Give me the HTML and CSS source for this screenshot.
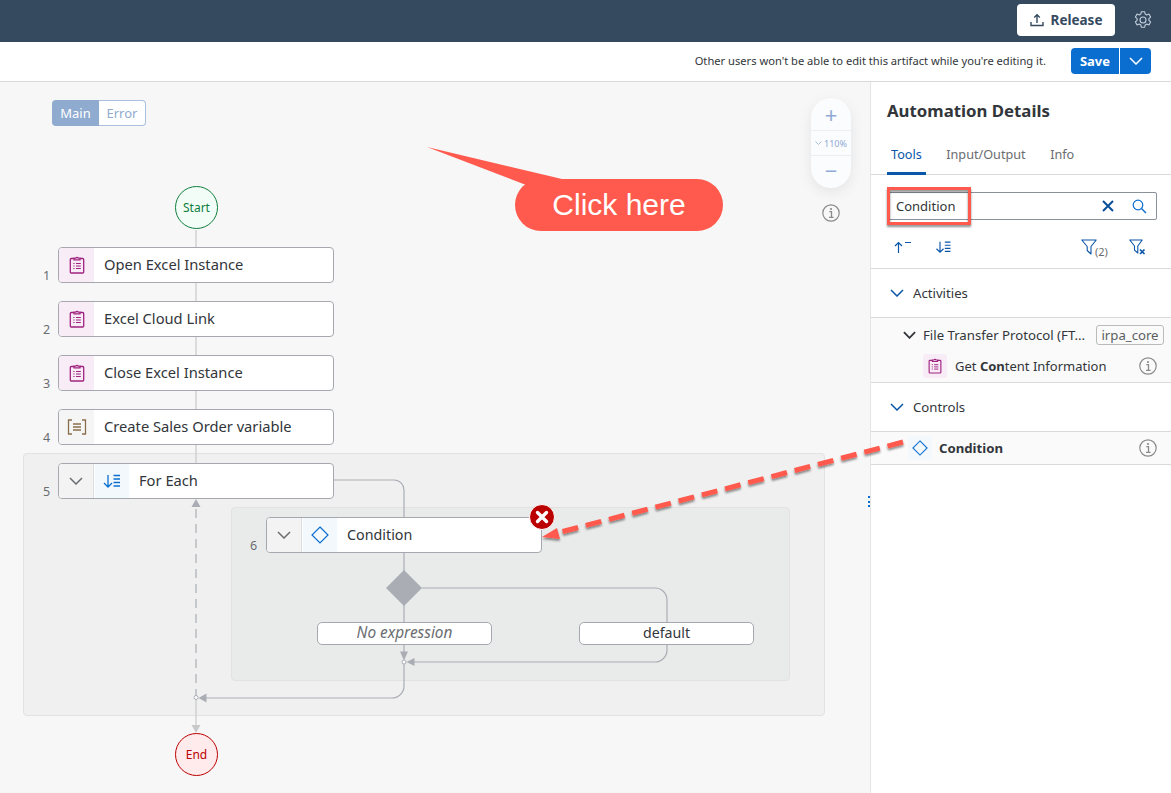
FILE: index.html
```html
<!DOCTYPE html>
<html>
<head>
<title>Automation Details</title>
<meta charset="UTF-8" />
<link rel="stylesheet" href="styles.css">
</head>
<body>
<svg class="defs" width="0" height="0">
	<defs>
		<symbol id="clip" viewBox="0 0 16 18">
			<path d="M5 2.5H2.2a.9.9 0 0 0-.9.9v12.7a.9.9 0 0 0 .9.9h11.6a.9.9 0 0 0 .9-.9V3.400a.9.9 0 0 0-.9-.9H11" fill="none" stroke="currentColor" stroke-width="1.300"/>
			<path d="M5 3.800V2.200h1.800a1.300 1.300 0 0 1 2.400 0H11v1.600z" fill="none" stroke="currentColor" stroke-width="1.200"/>
			<path d="M4.300 7.500h1.200M7 7.500h4.800M4.300 10h1.200M7 10h4.800M4.300 12.500h1.200M7 12.500h4.800" stroke="currentColor" stroke-width="1.100" fill="none"/>
		</symbol>
		<symbol id="diamond" viewBox="0 0 18 18">
			<path d="M9 1l8 8-8 8-8-8z" fill="none" stroke="currentColor" stroke-width="1.200"/>
		</symbol>
		<symbol id="sortdown" viewBox="0 0 18 16">
			<path d="M5 2v12M1 10l4 4 4-4" fill="none" stroke="currentColor" stroke-width="1.300"/>
			<path d="M10.500 2.500H17M10.500 6H17M10.500 9.500H17M10.500 13H17" fill="none" stroke="currentColor" stroke-width="1.300"/>
		</symbol>
		<symbol id="info" viewBox="0 0 18 18">
			<circle cx="9" cy="9" r="8.200" fill="none" stroke="currentColor" stroke-width="1.200"/>
			<path d="M7.300 7.600H9.500V13M7 13.300h4.600" fill="none" stroke="currentColor" stroke-width="1.300"/>
			<circle cx="9" cy="5" r="1.100" fill="currentColor"/>
		</symbol>
		<symbol id="chev" viewBox="0 0 14 8">
			<path d="M1 1l6 6 6-6" fill="none" stroke="currentColor" stroke-width="1.500"/>
		</symbol>
	</defs>
</svg>

<header class="shell">
	<button class="release">
		<svg width="14" height="14" viewBox="0 0 14 14"><path d="M7 10V2M4.200 4.500L7 1.700l2.800 2.800M1 9v3.500h12V9" fill="none" stroke="currentColor" stroke-width="1.400"/></svg>
		Release
	</button>
	<svg class="gear" width="20" height="20" viewBox="0 0 20 20"><path d="M8.300 1.800h3.400l.5 2.300 1.500.8 2.200-.8 1.700 3-1.700 1.500v1.800l1.700 1.500-1.700 3-2.200-.8-1.500.8-.5 2.300H8.300l-.5-2.300-1.500-.8-2.200.8-1.700-3 1.700-1.500V8.600L2.400 7.100l1.700-3 2.200.8 1.500-.8z" fill="none" stroke="currentColor" stroke-width="1.100" stroke-linejoin="round"/><circle cx="10" cy="10" r="3" fill="none" stroke="currentColor" stroke-width="1.100"/></svg>
</header>

<div class="notice">
	<span>Other users won't be able to edit this artifact while you're editing it.</span>
	<div class="save">
		<span class="save-label">Save</span>
		<span class="save-more"><svg width="14" height="8"><use href="#chev"/></svg></span>
	</div>
</div>

<main class="work">
	<section class="canvas">
		<div class="switch"><span class="switch-on">Main</span><span class="switch-off">Error</span></div>

		<div class="group outer"></div>
		<div class="group inner"></div>

		<svg class="wires" width="870" height="711" viewBox="0 82 870 711">
			<path class="wire-light" d="M196 230V463"/>
			<path class="wire-light" d="M196 698V726"/>
			<path class="wire-dash" d="M196 698V507"/>
			<path class="wire" d="M334 480H394a10 10 0 0 1 10 10V517"/>
			<path class="wire" d="M404 553V622M404 645V652"/>
			<path class="wire" d="M422 588H655a12 12 0 0 1 12 12V650a12 12 0 0 1-12 12H414"/>
			<path class="wire" d="M404 662V686a12 12 0 0 1-12 12H206"/>
			<path class="head" d="M196 499l4.500 8h-9z"/>
			<path class="head" d="M404 660.500l-4-9h8z"/>
			<path class="head" d="M406.500 662l8-4v8z"/>
			<path class="head" d="M198.500 698l8-4.500v9z"/>
			<path class="head-light" d="M196 733l-4.500-8h9z"/>
			<path class="head" d="M404 570l18 18-18 18-18-18z"/>
			<circle class="dot" cx="404" cy="662" r="2"/>
			<circle class="dot" cx="196" cy="697.500" r="2"/>
			<path class="tail" d="M427 147L562 179 526 185z"/>
		</svg>

		<div class="term start">Start</div>
		<div class="term end">End</div>

		<span class="num n1">1</span>
		<div class="node r1"><span class="ico ico-act"><svg width="16" height="18"><use href="#clip"/></svg></span><span class="lbl">Open Excel Instance</span></div>
		<span class="num n2">2</span>
		<div class="node r2"><span class="ico ico-act"><svg width="16" height="18"><use href="#clip"/></svg></span><span class="lbl">Excel Cloud Link</span></div>
		<span class="num n3">3</span>
		<div class="node r3"><span class="ico ico-act"><svg width="16" height="18"><use href="#clip"/></svg></span><span class="lbl">Close Excel Instance</span></div>
		<span class="num n4">4</span>
		<div class="node r4"><span class="ico ico-var"><svg width="20" height="16" viewBox="0 0 20 16"><path d="M5 1H1.500v14H5M15 1h3.500v14H15M6 5h8M6 8h8M6 11h8" fill="none" stroke="currentColor" stroke-width="1.300"/></svg></span><span class="lbl">Create Sales Order variable</span></div>
		<span class="num n5">5</span>
		<div class="node r5"><span class="tog"><svg width="14" height="8"><use href="#chev"/></svg></span><span class="ico ico-ctl"><svg width="18" height="16"><use href="#sortdown"/></svg></span><span class="lbl">For Each</span></div>
		<span class="num n6">6</span>
		<div class="node r6"><span class="tog"><svg width="14" height="8"><use href="#chev"/></svg></span><span class="ico ico-ctl"><svg width="18" height="18"><use href="#diamond"/></svg></span><span class="lbl">Condition</span></div>

		<div class="err"><svg width="26" height="26" viewBox="0 0 26 26"><circle cx="13" cy="13" r="12.500" fill="#bb0000" stroke="#fff" stroke-width="1"/><path d="M8.500 8.500l9 9M17.500 8.500l-9 9" stroke="#fff" stroke-width="3.400" stroke-linecap="round"/></svg></div>

		<div class="case c-none">No expression</div>
		<div class="case c-default">default</div>

		<div class="zoom">
			<span class="zoom-btn zoom-plus">+</span>
			<span class="zoom-val"><svg width="7" height="4"><use href="#chev"/></svg> 110%</span>
			<span class="zoom-btn zoom-minus">−</span>
		</div>
		<svg class="zoom-info" width="18" height="18"><use href="#info"/></svg>

		<div class="callout">Click here</div>
		<span class="grip"></span>
	</section>

	<aside class="panel">
		<h1>Automation Details</h1>
		<nav class="tabs">
			<a class="tab active">Tools</a>
			<a class="tab">Input/Output</a>
			<a class="tab">Info</a>
		</nav>
		<div class="search">
			<span class="search-text">Condition</span>
			<svg class="search-x" width="12" height="12" viewBox="0 0 12 12"><path d="M1 1l10 10M11 1L1 11" stroke="currentColor" stroke-width="2"/></svg>
			<svg class="search-go" width="15" height="15" viewBox="0 0 15 15"><circle cx="6" cy="6" r="4.800" fill="none" stroke="currentColor" stroke-width="1.200"/><path d="M9.500 9.500L14 14" stroke="currentColor" stroke-width="1.400"/></svg>
		</div>
		<div class="tools">
			<svg class="t-asc" width="17" height="12" viewBox="0 0 17 12"><path d="M4.500 12V1.500M1 5l3.500-3.500L8 5M11 1.500h6" fill="none" stroke="currentColor" stroke-width="1.200"/></svg>
			<svg class="t-desc" width="17" height="14"><use href="#sortdown"/></svg>
			<span class="t-filter">
				<svg width="16" height="16" viewBox="0 0 16 16"><path d="M.8 1h14.400L10 7.500V15L6.200 11.500v-4z" fill="none" stroke="currentColor" stroke-width="1.100" stroke-linejoin="round"/></svg>
				<span class="t-count">(2)</span>
			</span>
			<svg class="t-clear" width="17" height="16" viewBox="0 0 17 16"><path d="M.8 1h12.400L8.800 7V14L5.500 11.200V7z" fill="none" stroke="currentColor" stroke-width="1.100" stroke-linejoin="round"/><path d="M11 10.500l4.500 4.500M15.500 10.500L11 15" stroke="currentColor" stroke-width="1.700"/></svg>
		</div>
		<div class="sec"><svg width="14" height="8"><use href="#chev"/></svg><span>Activities</span></div>
		<div class="grp">
			<div class="grp-head">
				<svg width="13" height="8" viewBox="0 0 14 8"><path d="M1 1l6 6 6-6" fill="none" stroke="currentColor" stroke-width="2"/></svg>
				<span class="grp-name">File Transfer Protocol (FT...</span>
				<span class="tag">irpa_core</span>
			</div>
			<div class="item">
				<span class="item-ico"><svg width="14" height="16"><use href="#clip"/></svg></span>
				<span class="item-name">Get <b>Con</b>tent Information</span>
				<svg class="item-info" width="18" height="18"><use href="#info"/></svg>
			</div>
		</div>
		<div class="sec"><svg width="14" height="8"><use href="#chev"/></svg><span>Controls</span></div>
		<div class="ctl">
			<span class="ctl-ico"><svg width="16" height="16"><use href="#diamond"/></svg></span>
			<b>Condition</b>
			<svg class="item-info" width="18" height="18"><use href="#info"/></svg>
		</div>
	</aside>
</main>

<svg class="marks" width="1171" height="793" viewBox="0 0 1171 793">
	<defs>
		<filter id="soft" x="-10%" y="-30%" width="120%" height="170%"><feDropShadow dx="0" dy="2" stdDeviation="1.300" flood-color="#000" flood-opacity=".45"/></filter>
	</defs>
	<g filter="url(#soft)">
		<rect x="888.500" y="188.500" width="81" height="35" fill="none" stroke="#ff5a4d" stroke-width="3"/>
		<path d="M903 442L557 533" fill="none" stroke="#ff5a4d" stroke-width="5" stroke-dasharray="16 8"/>
		<path d="M542 537l15-9 3 11z" fill="#ff5a4d"/>
	</g>
</svg>
</body>
</html>
```

FILE: styles.css
```css
*{
	box-sizing: border-box ;
}
html, body{
	margin: 0 ;
	padding: 0 ;
}
body{
	position: relative ;
	width: 1171px ;
	height: 793px ;
	overflow: hidden ;
	background: #fff ;
	color: #32363a ;
	font-family: "Noto Sans", "Liberation Sans", sans-serif ;
	font-size: 13.2px ;
}
b{
	font-weight: 700 ;
}
.defs{
	position: absolute ;
}

/* top bars */
.shell{
	height: 42px ;
	background: #354a5f ;
	display: flex ;
	align-items: center ;
	justify-content: flex-end ;
	padding: 0 18px 2px 0 ;
	gap: 18px ;
}
.release{
	width: 98px ;
	height: 32px ;
	background: #fff ;
	color: #354a5f ;
	border: 0 ;
	border-radius: 4px ;
	font: 700 13.500px "Noto Sans", sans-serif ;
	display: flex ;
	align-items: center ;
	justify-content: center ;
	gap: 7px ;
}
.gear{
	color: #c3d0de ;
}
.notice{
	height: 40px ;
	border-bottom: 1px solid #d9d9d9 ;
	display: flex ;
	align-items: center ;
	justify-content: flex-end ;
	padding: 0 20px 1px 0 ;
	gap: 25px ;
	font-size: 11.150px ;
}
.notice > span{
	padding-bottom: 1px ;
}
.save{
	display: flex ;
	height: 26px ;
	color: #fff ;
	font-weight: 700 ;
}
.save-label{
	width: 48px ;
	background: #0a6ed1 ;
	border-radius: 4px 0 0 4px ;
	display: flex ;
	align-items: center ;
	justify-content: center ;
	font-size: 13px ;
}
.save-more{
	width: 31px ;
	margin-left: 1px ;
	background: #0a6ed1 ;
	border-radius: 0 4px 4px 0 ;
	display: flex ;
	align-items: center ;
	justify-content: center ;
}
.work{
	display: flex ;
	height: 711px ;
}

/* canvas */
.canvas{
	position: relative ;
	width: 870px ;
	background: #f7f7f7 ;
	font-size: 14.700px ;
}
.switch{
	position: absolute ;
	left: 52px ;
	top: 18px ;
	display: flex ;
	height: 26px ;
	font-size: 13px ;
}
.switch-on{
	width: 47px ;
	background: #8fabcf ;
	color: #fff ;
	border-radius: 4px 0 0 4px ;
	text-align: center ;
	line-height: 26px ;
}
.switch-off{
	width: 47px ;
	background: #fff ;
	color: #8fabcf ;
	border: 1px solid #a9bfdb ;
	border-left: 0 ;
	border-radius: 0 4px 4px 0 ;
	text-align: center ;
	line-height: 24px ;
}
.group{
	position: absolute ;
	border: 1px solid #e2e2e2 ;
	border-radius: 4px ;
}
.outer{
	left: 23px ;
	top: 371px ;
	width: 802px ;
	height: 263px ;
	background: #f0f0f0 ;
}
.inner{
	left: 231px ;
	top: 425px ;
	width: 559px ;
	height: 174px ;
	background: #e9ebeb ;
}
.wires{
	position: absolute ;
	left: 0 ;
	top: 0 ;
}
.wire, .wire-light, .wire-dash{
	fill: none ;
	stroke: #aaaeb4 ;
	stroke-width: 1.200 ;
}
.wire-light{
	stroke: #c9c9c9 ;
}
.wire-dash{
	stroke-dasharray: 9 6 ;
}
.head{
	fill: #aaaeb4 ;
}
.head-light{
	fill: #c9c9c9 ;
}
.dot{
	fill: #fff ;
	stroke: #aaaeb4 ;
}
.tail{
	fill: #ff5a4d ;
}
.term{
	position: absolute ;
	left: 175px ;
	width: 43px ;
	height: 43px ;
	border-radius: 50% ;
	display: flex ;
	align-items: center ;
	justify-content: center ;
	font-size: 12px ;
}
.start{
	top: 104px ;
	background: #f1fdf6 ;
	border: 1px solid #107e3e ;
	color: #107e3e ;
}
.end{
	top: 651px ;
	background: #ffebeb ;
	border: 1px solid #bb0000 ;
	color: #bb0000 ;
}
.num{
	position: absolute ;
	left: 43px ;
	font-size: 12.500px ;
	line-height: 14px ;
	color: #6a6d70 ;
}
.n1{ top: 187px ; }
.n2{ top: 241px ; }
.n3{ top: 295px ; }
.n4{ top: 349px ; }
.n5{ top: 403px ; }
.n6{ top: 457px ; left: 250px ; }
.node{
	position: absolute ;
	left: 58px ;
	width: 276px ;
	height: 36px ;
	background: #fff ;
	border: 1px solid #a5a9af ;
	border-radius: 4px ;
	display: flex ;
	align-items: stretch ;
	overflow: hidden ;
}
.r1{ top: 165px ; }
.r2{ top: 219px ; }
.r3{ top: 273px ; }
.r4{ top: 327px ; }
.r5{ top: 381px ; }
.r6{ top: 435px ; left: 266px ; font-size: 14.300px ; }
.ico{
	width: 35px ;
	display: flex ;
	align-items: center ;
	justify-content: center ;
}
.ico-act{
	background: #f8ecf6 ;
	color: #a0237f ;
}
.ico-var{
	background: #f5f5f5 ;
	color: #8a6d4b ;
}
.ico-ctl{
	width: 34px ;
	background: #f3f8fd ;
	color: #0a6ed1 ;
}
.tog{
	width: 35px ;
	margin-right: 1px ;
	background: #f3f3f3 ;
	border-right: 1px solid #dedede ;
	color: #6a6d70 ;
	display: flex ;
	align-items: center ;
	justify-content: center ;
}
.lbl{
	align-self: center ;
	padding: 0 0 2px 10px ;
	white-space: nowrap ;
}
.err{
	position: absolute ;
	left: 529px ;
	top: 422px ;
	line-height: 0 ;
}
.case{
	position: absolute ;
	top: 540px ;
	width: 175px ;
	height: 23px ;
	background: #fff ;
	border: 1px solid #a5a9af ;
	border-radius: 5px ;
	text-align: center ;
	line-height: 20px ;
}
.c-none{
	left: 317px ;
	font-size: 15.400px ;
	font-style: italic ;
	color: #6a6d70 ;
}
.c-default{
	left: 579px ;
	font-size: 14.200px ;
}
.zoom{
	position: absolute ;
	left: 811px ;
	top: 16px ;
	width: 40px ;
	height: 90px ;
	background: #fbfcfd ;
	border-radius: 20px ;
	box-shadow: 0 4px 14px rgba(0, 0, 0, .08) ;
	display: flex ;
	flex-direction: column ;
	color: #8fabd5 ;
}
.zoom-btn{
	height: 32px ;
	display: flex ;
	align-items: center ;
	justify-content: center ;
	font-size: 22px ;
	line-height: 1 ;
}
.zoom-minus{
	padding-bottom: 4px ;
}
.zoom-val{
	height: 26px ;
	border-top: 1px solid #eee ;
	border-bottom: 1px solid #eee ;
	display: flex ;
	align-items: center ;
	justify-content: center ;
	gap: 2px ;
	font-size: 9px ;
	white-space: nowrap ;
}
.zoom-info{
	position: absolute ;
	left: 822px ;
	top: 122px ;
	color: #8b8b8b ;
}
.callout{
	position: absolute ;
	left: 515px ;
	top: 97px ;
	width: 208px ;
	height: 52px ;
	background: #ff5a4d ;
	border-radius: 26px ;
	color: #fff ;
	font-family: "Liberation Sans", sans-serif ;
	font-size: 30px ;
	line-height: 51px ;
	text-align: center ;
}
.grip{
	position: absolute ;
	left: 868px ;
	top: 414px ;
	width: 2px ;
	height: 11px ;
	background: repeating-linear-gradient(#0a6ed1 0 2px, transparent 2px 4.500px) ;
}

/* side panel */
.panel{
	width: 301px ;
	border-left: 1px solid #e5e5e5 ;
	background: #fff ;
}
.panel h1{
	margin: 0 ;
	padding: 17px 0 0 16px ;
	height: 50px ;
	font-size: 16.800px ;
	line-height: 24px ;
	font-weight: 700 ;
}
.tabs{
	display: flex ;
	height: 43px ;
	padding-left: 16px ;
	border-bottom: 1px solid #d9d9d9 ;
	gap: 16.500px ;
	font-size: 12.650px ;
}
.tab{
	color: #6a6d70 ;
	line-height: 44px ;
	height: 43px ;
	padding: 0 4px ;
}
.active{
	color: #0a56a8 ;
	border-bottom: 3px solid #0a56a8 ;
}
.search{
	margin: 17px 14px 0 17px ;
	height: 28px ;
	border: 1px solid #89919a ;
	border-radius: 2px ;
	display: flex ;
	align-items: center ;
	padding-left: 7px ;
	font-size: 13px ;
}
.search-text{
	flex: 1 ;
}
.search-x{
	color: #0a4f99 ;
	margin-right: 18px ;
}
.search-go{
	color: #0a6ed1 ;
	margin-right: 9px ;
}
.tools{
	height: 49px ;
	padding: 6px 0 0 23px ;
	display: flex ;
	align-items: center ;
	color: #0a56a8 ;
	border-bottom: 1px solid #d9d9d9 ;
}
.t-desc{
	margin-left: 24px ;
}
.t-filter{
	margin-left: 129px ;
	display: flex ;
	align-items: flex-end ;
}
.t-count{
	font-size: 11px ;
	color: #6a6d70 ;
	margin: 0 0 -4px -2px ;
}
.t-clear{
	margin-left: 21px ;
}
.sec{
	height: 49px ;
	display: flex ;
	align-items: center ;
	gap: 9px ;
	padding-left: 19px ;
	border-bottom: 1px solid #d9d9d9 ;
	color: #0a56a8 ;
}
.sec span{
	color: #32363a ;
}
.grp{
	background: #fafafa ;
	height: 65px ;
	border-bottom: 1px solid #d9d9d9 ;
}
.grp-head{
	height: 33px ;
	display: flex ;
	align-items: center ;
	padding-left: 32px ;
	gap: 7px ;
}
.grp-name{
	white-space: nowrap ;
	flex: 1 ;
}
.tag{
	flex: none ;
	width: 68px ;
	height: 20px ;
	margin-right: 7px ;
	border: 1px solid #bbb ;
	border-radius: 3px ;
	text-align: center ;
	line-height: 18px ;
	color: #5a5e62 ;
}
.item{
	display: flex ;
	align-items: center ;
	height: 30px ;
	padding-left: 52px ;
}
.item-ico{
	width: 24px ;
	height: 24px ;
	background: #f8ecf6 ;
	color: #a0237f ;
	border-radius: 3px ;
	display: flex ;
	align-items: center ;
	justify-content: center ;
	margin-right: 8px ;
}
.item-name{
	flex: 1 ;
	white-space: nowrap ;
	font-size: 13px ;
}
.item-info{
	color: #8b8b8b ;
	margin-right: 14px ;
}
.ctl{
	height: 33px ;
	background: #fafafa ;
	border-bottom: 1px solid #d9d9d9 ;
	display: flex ;
	align-items: center ;
	padding-left: 37px ;
}
.ctl-ico{
	width: 24px ;
	height: 24px ;
	background: #f3f8fd ;
	color: #0a6ed1 ;
	display: flex ;
	align-items: center ;
	justify-content: center ;
	margin-right: 7px ;
}
.ctl b{
	flex: 1 ;
}

/* annotation marks drawn over the screenshot */
.marks{
	position: absolute ;
	left: 0 ;
	top: 0 ;
	pointer-events: none ;
}
```
